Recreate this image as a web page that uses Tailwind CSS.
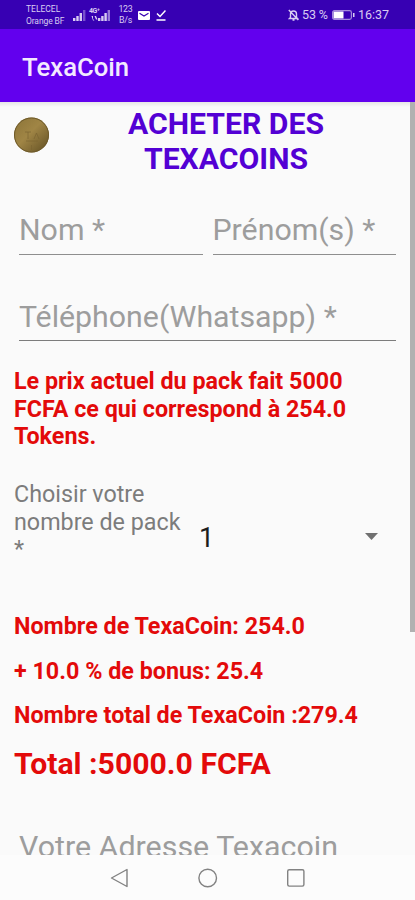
<!DOCTYPE html>
<html lang="fr">
<head>
    <meta charset="UTF-8">
    <meta name="viewport" content="width=device-width, initial-scale=1.0">
    <title>TexaCoin</title>
    <script src="https://cdn.jsdelivr.net/npm/@tailwindcss/browser@4"></script>
</head>
<body class="w-[415px] h-[900px] overflow-hidden flex flex-col bg-[#fafafa] font-['Roboto',sans-serif]">
    <!-- Status bar -->
    <div class="h-[29px] shrink-0 bg-[#3700b3] text-[#d9ccf2] flex items-center justify-between pl-[26px] pr-[25px] pt-px">
        <div class="flex items-center">
            <div class="w-[47px] text-[8.5px] leading-[12px] whitespace-nowrap">
                <div>TELECEL</div>
                <div class="tracking-[-0.1px]">Orange BF</div>
            </div>
            <svg class="w-[13px] h-[12px]" viewBox="0 0 13 12" fill="currentColor">
                <path d="M0 9h2.400v3H0zM3.300 7h2.400v5H3.300zM6.600 4H9v8H6.600z"/>
                <path d="M10 1h2.400v11H10z" opacity=".4"/>
            </svg>
            <div class="relative ml-[3px] w-[22px] h-[14px]">
                <span class="absolute left-0 top-0 text-[7px] leading-[7px] font-bold tracking-[-0.4px]">4G⁺</span>
                <svg class="absolute left-0 top-0 w-[22px] h-[14px]" viewBox="0 0 22 14" fill="currentColor">
                    <path d="M2.500 8h1.500v3l1.500 1.500H4zM5.500 8H7l1.500 3.500H7z"/>
                    <path d="M9 10h2.400v3H9zM12.200 8h2.400v5h-2.400zM15.400 5h2.400v8h-2.400z"/>
                    <path d="M18.600 2H21v11h-2.400z" opacity=".6"/>
                </svg>
            </div>
            <div class="ml-[6px] w-[17px] text-center text-[8.800px] leading-[11px] tracking-[-0.2px]">
                <div>123</div>
                <div>B/s</div>
            </div>
            <svg class="ml-[4px] w-[12px] h-[9px]" viewBox="0 0 12 9">
                <rect width="12" height="9" rx="1" fill="#fff"/>
                <path d="M1.500 2.200 6 5l4.500-2.800" fill="none" stroke="#3700b3" stroke-width="1.200"/>
            </svg>
            <svg class="ml-[6px] w-[10px] h-[12px]" viewBox="0 0 10 12" fill="none" stroke="#fff" stroke-width="1.500">
                <path d="M1 4.500 4 7.500 9.500 1.500M.5 11H9.500"/>
            </svg>
        </div>
        <div class="flex items-center text-[12.500px]">
            <svg class="w-[11px] h-[12px]" viewBox="0 0 11 12" fill="none" stroke="currentColor" stroke-width="1.400">
                <path d="M2.500 8.500V5a3 3 0 0 1 6 0v3.500l1 1h-8zM4.500 11h2M.8 1l9.500 10"/>
            </svg>
            <span class="ml-[3px] w-[27px] whitespace-nowrap tracking-[-0.1px]">53 %</span>
            <svg class="ml-[3px] w-[23px] h-[10px]" viewBox="0 0 23 10">
                <rect x=".6" y=".6" width="18.800" height="8.800" rx="1.800" fill="none" stroke="#a58bdc" stroke-width="1.200"/>
                <rect x="1.500" y="1.500" width="10" height="7" fill="#fff"/>
                <path d="M21 3h1.500v4H21z" fill="#d9ccf2"/>
            </svg>
            <span class="ml-[3px] w-[32px] whitespace-nowrap">16:37</span>
        </div>
    </div>

    <!-- App bar -->
    <header class="h-[73px] shrink-0 bg-[#6200ee] flex items-center pl-[22px] pt-[4px]">
        <h1 class="text-[25.700px] font-medium text-[#f3e9ff]">TexaCoin</h1>
    </header>

    <!-- Form -->
    <main class="relative h-[753px] shrink-0 overflow-hidden pl-[14px] pr-[14px]">
        <div class="absolute inset-x-0 top-0 h-[5px] bg-linear-to-b from-black/8 to-transparent"></div>
        <div class="absolute right-0 top-0 w-[5px] h-[530px] bg-[#b1b1b1]"></div>

        <div class="flex pt-[4px] h-[86px]">
            <svg class="mt-[11px] w-[36px] h-[36px]" viewBox="0 0 36 36">
                <defs>
                    <linearGradient id="gold" x1="0" y1="0" x2="1" y2="1">
                        <stop offset="0" stop-color="#8b7438"/>
                        <stop offset=".45" stop-color="#a08545"/>
                        <stop offset="1" stop-color="#5f4d22"/>
                    </linearGradient>
                </defs>
                <circle cx="17.500" cy="18" r="17.500" fill="url(#gold)"/>
                <circle cx="17.500" cy="18" r="17" fill="none" stroke="#6e5a2b" stroke-width="1"/>
                <path d="M11 15h6M14 15v7M20 22l2.500-6 2.500 6M12 24h12M17.500 28v5" fill="none" stroke="#7a6431" stroke-width="1" opacity=".7"/>
            </svg>
            <h2 class="ml-[2px] w-[348px] text-center text-[30.200px] leading-[35px] font-bold text-[#5300d4]">ACHETER DES<br>TEXACOINS</h2>
        </div>

        <div class="flex gap-[10px] px-[5px]">
            <div class="w-[184px] h-[67px] pt-[24px] border-b-[1.500px] border-[#8e8e8e] text-[30.300px] leading-[35px] text-[#9d9d9d] whitespace-nowrap">Nom *</div>
            <div class="w-[184px] h-[67px] pt-[24px] border-b-[1.500px] border-[#8e8e8e] text-[30.300px] leading-[35px] text-[#9d9d9d] whitespace-nowrap">Prénom(s) *</div>
        </div>
        <div class="mx-[5px] h-[86px] pt-[44px] border-b border-[#7c7c7c] text-[30.300px] leading-[35px] text-[#9d9d9d] whitespace-nowrap">Téléphone(Whatsapp) *</div>

        <p class="mt-[27px] text-[23.300px] leading-[27.700px] font-bold text-[#e30a0a] whitespace-nowrap">Le prix actuel du pack fait 5000<br>FCFA ce qui correspond à 254.0<br>Tokens.</p>

        <div class="flex mt-[30px] h-[128px]">
            <label class="w-[185px] text-[23.300px] leading-[27.500px] text-[#7c7c7c] whitespace-nowrap">Choisir votre<br>nombre de pack<br>*</label>
            <div class="flex-1 flex items-start justify-between pt-[41px] pr-[23px]">
                <span class="text-[27px] leading-[32px] text-[#1c1c1c]">1</span>
                <svg class="mt-[11px] w-[13px] h-[7px]" viewBox="0 0 13 7" fill="#707070"><path d="M0 0h13L6.500 7z"/></svg>
            </div>
        </div>

        <div class="text-[23.300px] leading-[28px] font-bold text-[#e30a0a] whitespace-nowrap">
            <p class="mt-[3px]">Nombre de TexaCoin: 254.0</p>
            <p class="mt-[16.500px]">+ 10.0 % de bonus: 25.4</p>
            <p class="mt-[16.500px]">Nombre total de TexaCoin :279.4</p>
            <p class="mt-[17px] text-[30.200px] leading-[35px]">Total :5000.0 FCFA</p>
        </div>

        <div class="mt-[48px] px-[5px] text-[30.400px] leading-[35px] text-[#9d9d9d] whitespace-nowrap">Votre Adresse Texacoin</div>
    </main>

    <!-- Navigation bar -->
    <nav class="flex-1 bg-[#fcfcfc] flex items-start pt-[13px] pl-[110px] gap-[68px]">
        <svg class="w-[20px] h-[20px]" viewBox="0 0 20 20" fill="none" stroke="#828282" stroke-width="1.400" stroke-linejoin="round"><path d="M17 1.500v17L1.500 10z"/></svg>
        <svg class="w-[20px] h-[20px]" viewBox="0 0 20 20" fill="none" stroke="#828282" stroke-width="1.400"><circle cx="9.700" cy="10" r="8.800"/></svg>
        <svg class="w-[20px] h-[20px]" viewBox="0 0 20 20" fill="none" stroke="#828282" stroke-width="1.400"><rect x="1.700" y="1.700" width="16.200" height="16.400" rx="1.500"/></svg>
    </nav>
</body>
</html>
